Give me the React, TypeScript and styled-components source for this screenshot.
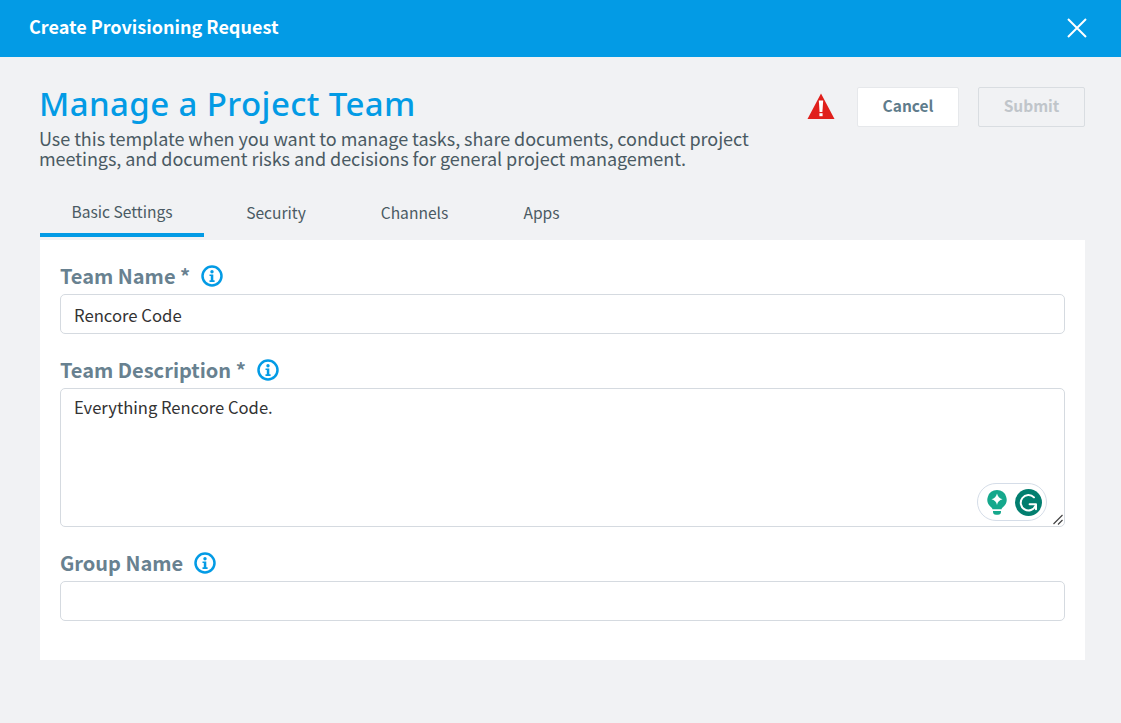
import React from "react";
import styled, { createGlobalStyle } from "styled-components";

const SOURCE = `"Noto Sans CJK SC", "Noto Sans", sans-serif`;

const Global = createGlobalStyle`
  html, body { margin: 0; padding: 0; height: 100%; background: #f1f2f4; }
  body { font-family: ${SOURCE}; overflow: hidden; }
  * { box-sizing: border-box; }
`;

const Page = styled.div`
  width: 1121px;
  height: 723px;
  background: #f1f2f4;
  display: flex;
  flex-direction: column;
`;

const TopBar = styled.header`
  height: 57px;
  flex: none;
  background: #039be5;
  display: flex;
  align-items: center;
  justify-content: space-between;
  padding: 0 33px 0 29px;
`;

const TopTitle = styled.h1`
  margin: 0 0 6px;
  color: #fff;
  font-size: 18px;
  font-weight: 700;
  line-height: 24px;
`;

const CloseButton = styled.button`
  border: 0;
  background: none;
  padding: 0;
  width: 22px;
  height: 22px;
  display: flex;
  margin-bottom: 1px;
`;

const Body = styled.main`
  padding: 27px 36px 0 40px;
  display: flex;
  flex-direction: column;
`;

const Head = styled.div`
  display: flex;
  justify-content: space-between;
  align-items: flex-start;
`;

const Intro = styled.div`
  width: 740px;
  margin-left: -1px;
`;

const Heading = styled.h2`
  margin: 0;
  color: #039be5;
  font-family: "Noto Sans", sans-serif;
  font-size: 33px;
  font-weight: 500;
  line-height: 40px;
  letter-spacing: 0.4px;
`;

const Lead = styled.p`
  margin: 4px 0 0;
  color: #4a5a63;
  font-size: 18px;
  line-height: 20px;
  letter-spacing: -0.05px;
`;

const Actions = styled.div`
  display: flex;
  align-items: flex-start;
  padding-top: 3px;
`;

const Warning = styled.svg`
  width: 28px;
  height: 26px;
  margin: 6px 22px 0 0;
`;

const ActionButton = styled.button<{ $disabled?: boolean }>`
  height: 40px;
  width: ${(p) => (p.$disabled ? "107px" : "102px")};
  margin-left: ${(p) => (p.$disabled ? "19px" : "0")};
  border-radius: 2px;
  border: 1px solid ${(p) => (p.$disabled ? "#d9dde1" : "#e6e8eb")};
  background: ${(p) => (p.$disabled ? "#f1f2f4" : "#fff")};
  color: ${(p) => (p.$disabled ? "#c0c5ca" : "#5f7c8c")};
  font-family: ${SOURCE};
  font-size: 15.5px;
  font-weight: 700;
  padding: 0 0 4px;
`;

const Tabs = styled.nav`
  display: flex;
  margin-top: 18px;
  height: 51px;
`;

const Tab = styled.div<{ $active?: boolean; $w: number }>`
  width: ${(p) => p.$w}px;
  height: 51px;
  display: flex;
  justify-content: center;
  padding-top: ${(p) => (p.$active ? "13px" : "14px")};
  color: #4a5a63;
  font-size: 15.6px;
  line-height: 24px;
  border-bottom: 4px solid ${(p) => (p.$active ? "#039be5" : "transparent")};
`;

const Panel = styled.section`
  margin-top: 3px;
  height: 420px;
  width: 1045px;
  background: #fff;
  padding: 23px 20px 0;
`;

const Field = styled.div`
  margin-bottom: 23px;
  position: relative;
`;

const LabelRow = styled.div`
  display: flex;
  align-items: center;
  gap: 11px;
  height: 26px;
  margin-bottom: 5px;
`;

const Label = styled.label`
  color: #688190;
  font-size: 20px;
  font-weight: 700;
  line-height: 26px;
`;

const TextInput = styled.input`
  display: block;
  width: 100%;
  height: 40px;
  border: 1px solid #d5dae0;
  border-radius: 5px;
  padding: 2px 13px 0;
  background: #fff;
  color: #333;
  font-family: ${SOURCE};
  font-size: 16.7px;
  outline: none;
`;

const TextArea = styled.textarea`
  display: block;
  width: 100%;
  height: 139px;
  border: 1px solid #d5dae0;
  border-radius: 5px;
  padding: 6px 13px;
  background: #fff;
  color: #333;
  font-family: ${SOURCE};
  font-size: 16.6px;
  line-height: 24px;
  outline: none;
  resize: none;
`;

const Grammarly = styled.div`
  position: absolute;
  right: 18px;
  bottom: 6px;
  width: 70px;
  height: 38px;
  border: 1.5px solid #d5dde8;
  border-radius: 19px;
  background: #fff;
  display: flex;
  align-items: center;
  justify-content: space-between;
  padding: 0 4px 0 9px;
`;

const ResizeHandle = styled.svg`
  position: absolute;
  right: 1px;
  bottom: 1px;
  width: 12px;
  height: 12px;
`;

const InfoIcon = () => (
  <svg width="22" height="22" viewBox="0 0 22 22" aria-hidden="true">
    <circle cx="11" cy="11" r="9.5" fill="none" stroke="#039be5" strokeWidth="2.5" />
    <circle cx="11" cy="6.7" r="1.7" fill="#039be5" />
    <path d="M8.5 9.4h3.8v5.8h1.3v1.7H8.5v-1.7h1.3v-4.1H8.5z" fill="#039be5" />
  </svg>
);

const GROUP_ICONS = {
  bulb: (
    <svg width="20" height="25" viewBox="0 0 20 25" aria-hidden="true">
      <path d="M10 0a9.6 9.6 0 0 1 5.6 17.4c-.7.5-1 1.1-1 1.9H5.4c0-.8-.3-1.4-1-1.9A9.6 9.6 0 0 1 10 0z" fill="#15a88c" />
      <path d="M6 21h8v.8a3 3 0 0 1-3 3H9a3 3 0 0 1-3-3z" fill="#15a88c" />
      <path d="M10 3.4c.7 3.1 2.4 4.9 5.6 5.8-3.2.8-4.9 2.6-5.6 5.7-.7-3.1-2.4-4.9-5.6-5.7 3.2-.9 4.9-2.7 5.6-5.8z" fill="#fff" />
    </svg>
  ),
  g: (
    <svg width="27" height="27" viewBox="0 0 27 27" aria-hidden="true">
      <circle cx="13.5" cy="13.5" r="13.5" fill="#027e6f" />
      <path d="M19 8.4A7.7 7.7 0 1 0 20.6 16.6" fill="none" stroke="#fff" strokeWidth="2" strokeLinecap="round" />
      <path d="M14.6 15.2h6.4v5" fill="none" stroke="#fff" strokeWidth="2" strokeLinecap="round" strokeLinejoin="round" />
    </svg>
  ),
};

export default function App() {
  return (
    <Page>
      <Global />
      <TopBar>
        <TopTitle>Create Provisioning Request</TopTitle>
        <CloseButton aria-label="Close">
          <svg width="22" height="22" viewBox="0 0 22 22">
            <path d="M2 2l18 18M20 2L2 20" stroke="#fff" strokeWidth="2" fill="none" />
          </svg>
        </CloseButton>
      </TopBar>
      <Body>
        <Head>
          <Intro>
            <Heading>Manage a Project Team</Heading>
            <Lead>
              Use this template when you want to manage tasks, share documents, conduct project
              meetings, and document risks and decisions for general project management.
            </Lead>
          </Intro>
          <Actions>
            <Warning viewBox="0 0 28 26" aria-hidden="true">
              <path d="M14 0.5L27.5 26H0.5z" fill="#e0201c" />
              <path d="M11.8 7.6h4.4l-.8 11.4h-2.8z" fill="#fff" />
              <path d="M12.4 20.2h3.2v3h-3.2z" fill="#fff" />
            </Warning>
            <ActionButton>Cancel</ActionButton>
            <ActionButton $disabled>Submit</ActionButton>
          </Actions>
        </Head>
        <Tabs>
          <Tab $active $w={164}>Basic Settings</Tab>
          <Tab $w={144}>Security</Tab>
          <Tab $w={133}>Channels</Tab>
          <Tab $w={121}>Apps</Tab>
        </Tabs>
        <Panel>
          <Field>
            <LabelRow>
              <Label>Team Name *</Label>
              <InfoIcon />
            </LabelRow>
            <TextInput defaultValue="Rencore Code" />
          </Field>
          <Field>
            <LabelRow>
              <Label>Team Description *</Label>
              <InfoIcon />
            </LabelRow>
            <TextArea defaultValue="Everything Rencore Code." spellCheck={false} />
            <Grammarly>
              {GROUP_ICONS.bulb}
              {GROUP_ICONS.g}
            </Grammarly>
            <ResizeHandle viewBox="0 0 12 12" aria-hidden="true">
              <path d="M10.5 1L1.5 10M10.5 6L6 10.5" stroke="#444" strokeWidth="1.2" fill="none" />
            </ResizeHandle>
          </Field>
          <Field>
            <LabelRow>
              <Label>Group Name</Label>
              <InfoIcon />
            </LabelRow>
            <TextInput />
          </Field>
        </Panel>
      </Body>
    </Page>
  );
}
